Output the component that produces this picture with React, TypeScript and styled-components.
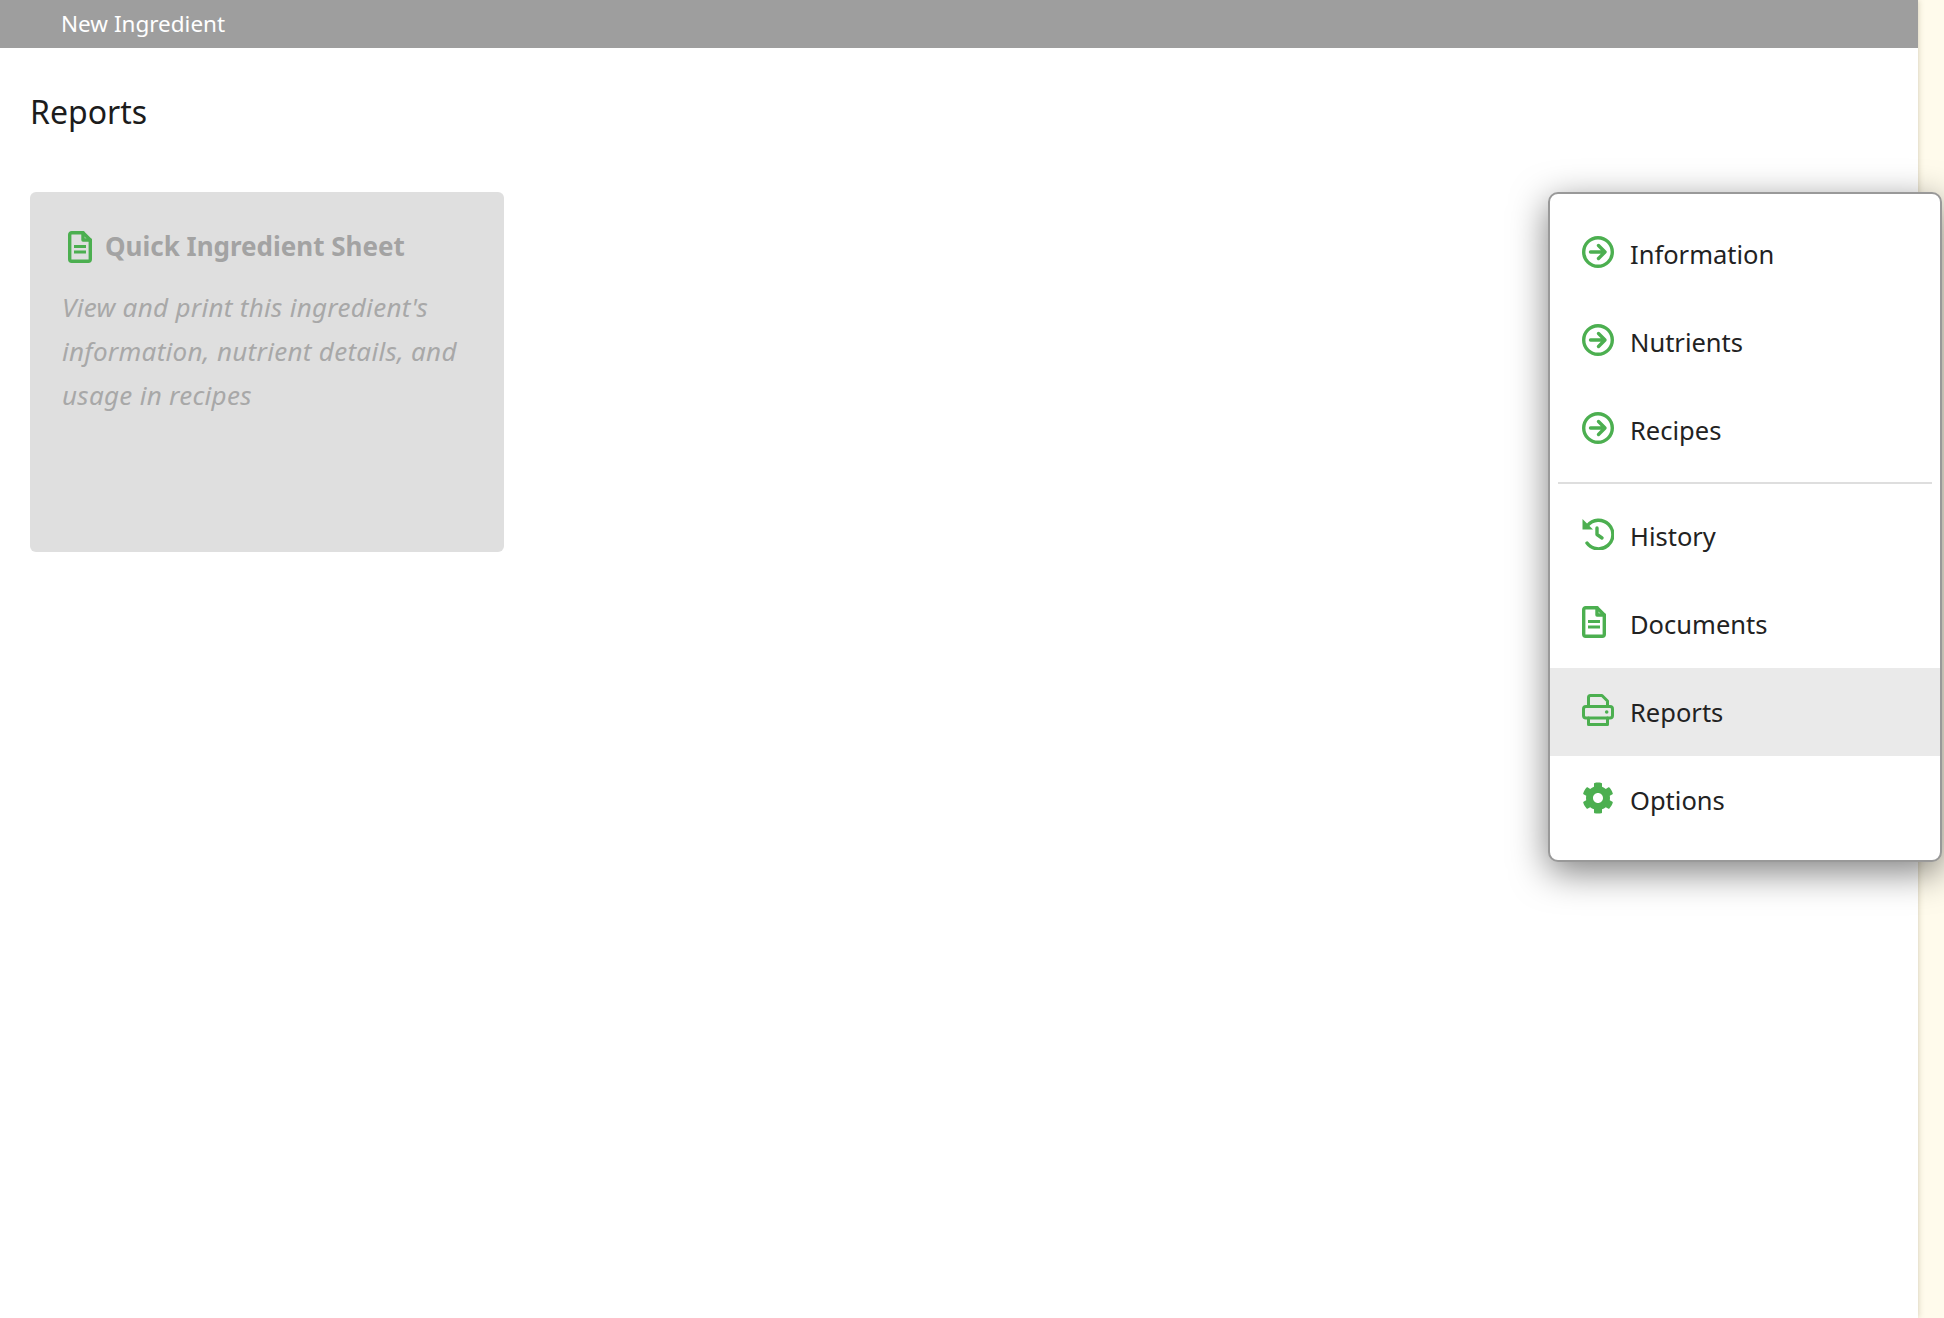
import { createGlobalStyle } from 'styled-components'
import styled from 'styled-components'
import { FaCog } from 'react-icons/fa'

const GREEN = '#4caf50'

const Global = createGlobalStyle`
  html, body { margin: 0; padding: 0; height: 100%; }
  body { background: #fffbec; font-family: 'Noto Sans', sans-serif; overflow: hidden; }
`

const Shell = styled.div`
  position: relative;
  width: 1944px;
  height: 1318px;
  display: flex;
  background: #fffbec;
  overflow: hidden;
`

const Main = styled.main`
  width: 1918px;
  height: 1318px;
  background: #fff;
  box-shadow: 0 0 6px rgba(120, 110, 70, 0.35);
`

const TopBar = styled.div`
  height: 48px;
  background: #9e9e9e;
  color: #fff;
  font-size: 22.5px;
  line-height: 48px;
  padding-left: 61px;
`

const Content = styled.div`
  padding: 42px 30px 0;
`

const Title = styled.h1`
  margin: 0 0 58px;
  font-size: 32px;
  line-height: 44px;
  font-weight: 400;
  color: #1c1c1c;
`

const Card = styled.div`
  box-sizing: border-box;
  width: 474px;
  height: 360px;
  padding: 32px;
  background: #dfdfdf;
  border-radius: 6px;
`

const CardHead = styled.div`
  display: flex;
  align-items: center;
  gap: 13px;
  height: 44px;
  padding-left: 6px;
  color: #a3a3a3;
  font-size: 26px;
  font-weight: 700;
`

const CardBody = styled.p`
  margin: 17px 0 0;
  font-size: 26px;
  line-height: 44px;
  letter-spacing: 0.3px;
  font-style: italic;
  color: #a8a8a8;
`

const Menu = styled.nav`
  position: absolute;
  top: 192px;
  left: 1548px;
  box-sizing: border-box;
  width: 394px;
  padding: 16px 0;
  background: #fff;
  border: 2px solid #999;
  border-radius: 10px;
  box-shadow: 0 10px 36px rgba(0, 0, 0, 0.5);
`

const Row = styled.div<{ $active?: boolean }>`
  display: flex;
  align-items: center;
  gap: 16px;
  height: 88px;
  padding-left: 32px;
  background: ${p => (p.$active ? '#eaeaea' : 'transparent')};
  color: #222;
  font-size: 25.5px;
`

const IconBox = styled.span<{ $narrow?: boolean }>`
  display: flex;
  flex: none;
  width: ${p => (p.$narrow ? '24px' : '32px')};
  height: 32px;
  margin-top: ${p => (p.$narrow ? '2px' : '-5px')};
  color: ${GREEN};
`

const Divider = styled.hr`
  height: 2px;
  margin: 8px;
  border: 0;
  background: #dedede;
`

const Glyph = styled.svg`
  width: 100%;
  height: 100%;
`

const stroke = { fill: 'none', stroke: 'currentColor', strokeWidth: 3.4, strokeLinecap: 'round', strokeLinejoin: 'round' } as const

const ArrowCircle = () => (
  <Glyph viewBox='0 0 32 32'>
    <g {...stroke}>
      <circle cx='16' cy='16' r='14.3' />
      <path d='M8.5 16h14M16.5 9.5 23 16l-6.5 6.5' />
    </g>
  </Glyph>
)

const History = () => (
  <Glyph viewBox='0 0 32 32'>
    <g {...stroke}>
      <path d='M5.5 7.5A14.3 14.3 0 1 1 5 25' />
      <path d='M15 10v6.5l5 3.5' />
    </g>
    <path d='M0.5 1 11 11.5 0.5 11.5z' fill='currentColor' />
  </Glyph>
)

const FileLines = () => (
  <Glyph viewBox='0 0 24 32' preserveAspectRatio='xMinYMid meet'>
    <g {...stroke}>
      <path d='M15 1.7H3.7a2 2 0 0 0-2 2v24.6a2 2 0 0 0 2 2h16.6a2 2 0 0 0 2-2V9z' />
      <path d='M15 1.7V9h7.3' />
      <path d='M6 15.5h12M6 21h12' strokeLinecap='butt' strokeWidth='3' />
    </g>
  </Glyph>
)

const Printer = () => (
  <Glyph viewBox='0 0 32 32'>
    <g {...stroke} strokeWidth='3'>
      <path d='M6.5 12.5V3.5a2 2 0 0 1 2-2h11.5l5.5 5.5v5.5' />
      <rect x='1.5' y='12.5' width='29' height='11.5' rx='2.5' />
      <path d='M6.5 24v6.5h19V24' />
    </g>
    <circle cx='24.7' cy='18' r='1.8' fill='currentColor' />
  </Glyph>
)

const items = [
  { label: 'Information', icon: <ArrowCircle /> },
  { label: 'Nutrients', icon: <ArrowCircle /> },
  { label: 'Recipes', icon: <ArrowCircle /> },
  { divider: true },
  { label: 'History', icon: <History /> },
  { label: 'Documents', icon: <FileLines /> },
  { label: 'Reports', icon: <Printer />, active: true },
  { label: 'Options', icon: <FaCog size={32} /> },
]

export default function App() {
  return (
    <Shell>
      <Global />
      <Main>
        <TopBar>New Ingredient</TopBar>
        <Content>
          <Title>Reports</Title>
          <Card>
            <CardHead>
              <IconBox $narrow>
                <FileLines />
              </IconBox>
              Quick Ingredient Sheet
            </CardHead>
            <CardBody>View and print this ingredient's information, nutrient details, and usage in recipes</CardBody>
          </Card>
        </Content>
      </Main>
      <Menu>
        {items.map((item, i) =>
          item.divider ? (
            <Divider key={i} />
          ) : (
            <Row key={i} $active={item.active}>
              <IconBox>{item.icon}</IconBox>
              {item.label}
            </Row>
          ),
        )}
      </Menu>
    </Shell>
  )
}
